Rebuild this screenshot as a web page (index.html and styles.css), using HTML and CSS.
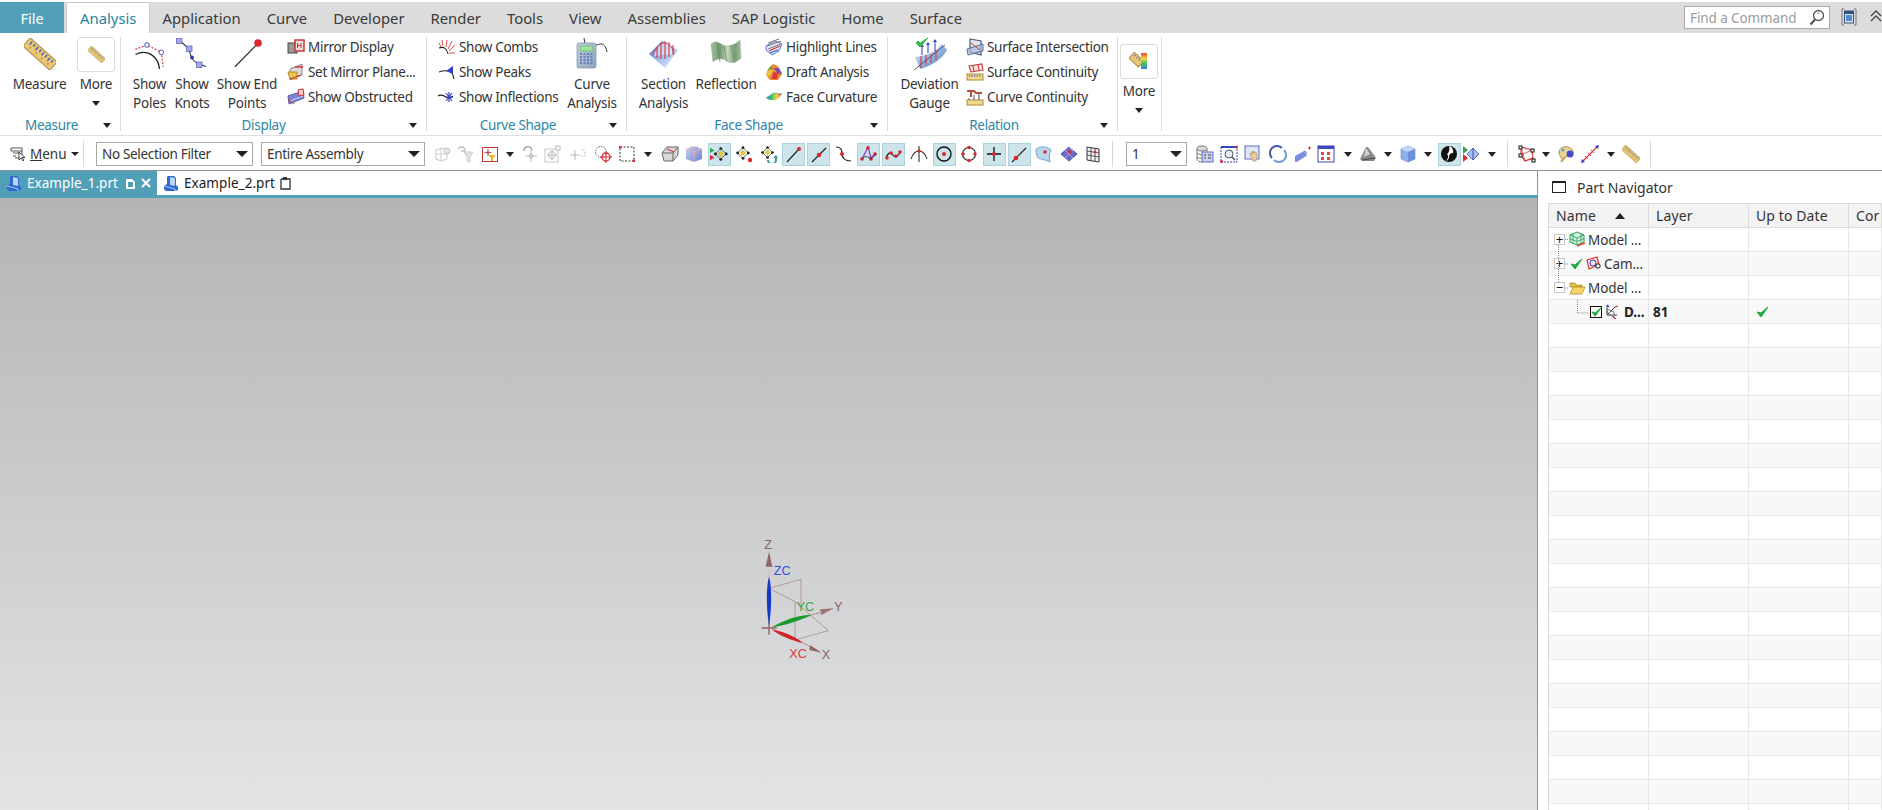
FILE: index.html
```html
<!DOCTYPE html>
<html lang="en">
<head>
<meta charset="utf-8">
<title>Part Navigator</title>
<link rel="stylesheet" href="styles.css">
</head>
<body>
<svg class="defs" aria-hidden="true">
  <defs>
    <linearGradient id="gBlue" x1="0" y1="0" x2="1" y2="1"><stop offset="0" stop-color="#3a5fd0"/><stop offset=".55" stop-color="#a9c4ee"/><stop offset="1" stop-color="#e8eef8"/></linearGradient>
    <linearGradient id="gDev" x1="0" y1="0" x2="1" y2="1"><stop offset="0" stop-color="#dfe9f6"/><stop offset="1" stop-color="#4d7fc8"/></linearGradient>
    <linearGradient id="gCube" x1="0" y1="0" x2="1" y2="1"><stop offset="0" stop-color="#c9d6f4"/><stop offset="1" stop-color="#6c7fd0"/></linearGradient>
    <linearGradient id="gCalc" x1="0" y1="0" x2="1" y2="1"><stop offset="0" stop-color="#c4d2dc"/><stop offset="1" stop-color="#8aa2bd"/></linearGradient>
    <linearGradient id="gGreen" x1="0" y1="0" x2="1" y2="0"><stop offset="0" stop-color="#a8bf9e"/><stop offset=".3" stop-color="#71986f"/><stop offset=".55" stop-color="#c7d6bf"/><stop offset=".8" stop-color="#759a73"/><stop offset="1" stop-color="#a8bf9e"/></linearGradient>
    <linearGradient id="gRain" x1="0" y1="0" x2="1" y2="0"><stop offset="0" stop-color="#3c7fe0"/><stop offset=".35" stop-color="#39c46a"/><stop offset=".65" stop-color="#f2d43a"/><stop offset="1" stop-color="#e84a3a"/></linearGradient>
    <linearGradient id="gRain2" x1="0" y1="0" x2="0" y2="1"><stop offset="0" stop-color="#e8483a"/><stop offset=".35" stop-color="#f4d83a"/><stop offset=".65" stop-color="#3cc46a"/><stop offset="1" stop-color="#3c7fe0"/></linearGradient>
    <symbol id="ruler" viewBox="0 0 32 32"><g transform="rotate(42 16 16)"><rect x="-2" y="10.500" width="36" height="11" fill="#e7c873" stroke="#a98c45"/><path d="M2 12v4M6 12v3M10 12v4M14 12v3M18 12v4M22 12v3M26 12v4M30 12v3" stroke="#4a58c8" stroke-width="1.400"/><path d="M4 18h1M12 18h1M20 18h1M28 18h1" stroke="#c84040" stroke-width="1.500"/></g></symbol>
    <symbol id="dia" viewBox="0 0 18 18"><path d="M9 3 15 9 9 15 3 9Z" fill="none" stroke="#555"/><path d="M9 6 12 9 9 12 6 9Z" fill="#f0cf2c" stroke="#8a7a20" stroke-width=".5"/><circle cx="9" cy="3" r="1.600" fill="#222"/><circle cx="15" cy="9" r="1.600" fill="#222"/><circle cx="9" cy="15" r="1.600" fill="#222"/><circle cx="3" cy="9" r="1.600" fill="#222"/></symbol>
  </defs>
</svg>

<header class="menubar">
  <div class="file-tab">File</div>
  <nav class="tabs">
    <span class="tab tab-active">Analysis</span>
    <span class="tab">Application</span>
    <span class="tab">Curve</span>
    <span class="tab">Developer</span>
    <span class="tab">Render</span>
    <span class="tab">Tools</span>
    <span class="tab">View</span>
    <span class="tab">Assemblies</span>
    <span class="tab">SAP Logistic</span>
    <span class="tab">Home</span>
    <span class="tab">Surface</span>
  </nav>
  <div class="search">
    <span class="search-text">Find a Command</span>
    <svg width="16" height="18" viewBox="0 0 16 18"><circle cx="9.500" cy="6.500" r="5" fill="#fff" stroke="#555" stroke-width="1.300"/><path d="M6 10.500 1.500 15.500" stroke="#555" stroke-width="2.200"/><path d="M8 4.500a3 3 0 0 1 3-.5" stroke="#999" fill="none"/></svg>
  </div>
  <svg class="win-btn" width="16" height="18" viewBox="0 0 16 18"><path d="M3 1H1v16h2M13 1h2v16h-2" fill="none" stroke="#777"/><rect x="3.500" y="3" width="9" height="12" fill="#dfe7f2" stroke="#33507e"/><rect x="3.500" y="3" width="9" height="3" fill="#33507e"/><rect x="5" y="7" width="6" height="6" fill="#4f8fd8"/></svg>
  <svg class="chev-btn" width="12" height="14" viewBox="0 0 12 14"><path d="M1 6 6 1l5 5M1 11l5-5 5 5" fill="none" stroke="#444" stroke-width="1.300"/></svg>
</header>

<section class="ribbon">
  <div class="group g-measure">
    <div class="gbody">
      <div class="lb w53"><div class="ic"><svg width="32" height="32"><use href="#ruler"/></svg></div><div class="lbl">Measure</div></div>
      <div class="lb more-btn"><div class="morebox"><svg width="17" height="17"><use href="#ruler"/></svg></div><div class="lbl">More</div><i class="tri tri-more"></i></div>
    </div>
    <div class="gfoot"><span class="gname">Measure</span><i class="tri"></i></div>
  </div>

  <div class="group g-display">
    <div class="gbody">
      <div class="lb w33"><div class="ic"><svg width="32" height="32" viewBox="0 0 32 32"><path d="M1.500 16.500C12 11 24 17 25.500 31" fill="none" stroke="#222" stroke-width="1.300"/><path d="M1.300 11.300 13 7 27.300 14.300 29.300 29" fill="none" stroke="#d8404a" stroke-width="1.200" stroke-dasharray="2 1.500"/><circle cx="13" cy="7" r="2.300" fill="#fff" stroke="#4a50b8"/><circle cx="27.300" cy="14.300" r="2.300" fill="#fff" stroke="#4a50b8"/></svg></div><div class="lbl">Show<br>Poles</div></div>
      <div class="lb w34"><div class="ic"><svg width="32" height="32" viewBox="0 0 32 32"><path d="M3.300 3C10 7 13 10 14 15s4 9 9 11l7 2.500" fill="none" stroke="#333" stroke-width="1.100"/><rect x=".5" y="0" width="5.500" height="5.500" fill="#a7a9e2" stroke="#5558b8" stroke-width=".7"/><rect x="10.500" y="8" width="5.500" height="5.500" fill="#a7a9e2" stroke="#5558b8" stroke-width=".7"/><rect x="20.500" y="24" width="5.500" height="5.500" fill="#a7a9e2" stroke="#5558b8" stroke-width=".7"/><circle cx="16" cy="19.500" r="2" fill="#3840b0"/></svg></div><div class="lbl">Show<br>Knots</div></div>
      <div class="lb w60"><div class="ic"><svg width="32" height="32" viewBox="0 0 32 32"><path d="M4 28.700 27 5.300" stroke="#333" stroke-width="1.300"/><circle cx="27" cy="5" r="3.800" fill="#d8282e"/></svg></div><div class="lbl">Show End<br>Points</div></div>
      <div class="sc ml10">
        <div class="sm"><svg width="18" height="18" viewBox="0 0 18 18"><rect x="1" y="5" width="9" height="10" fill="#9a9a9a" stroke="#444"/><rect x="8" y="2" width="9" height="11" fill="#f6dede" stroke="#c8282e" stroke-width="1.400"/><path d="M10.500 5v5M14 5v5M10.500 7.500h3" stroke="#c8282e"/></svg><span>Mirror Display</span></div>
        <div class="sm"><svg width="18" height="18" viewBox="0 0 18 18"><path d="M3 6 15 1v11L3 17Z" fill="#d8d8d8" stroke="#888"/><path d="M1 9h9v7H3Z" fill="#e9c650" stroke="#b08a20"/><path d="M8 4h8" stroke="#d8282e" stroke-width="1.400"/><path d="M3 16 14 12" stroke="#d8282e"/></svg><span>Set Mirror Plane...</span></div>
        <div class="sm"><svg width="18" height="18" viewBox="0 0 18 18"><path d="M1 8 16 3l1 7L2 16Z" fill="#7b84d8" stroke="#5c5cae"/><path d="M3 13l13-5" stroke="#d8d8f0"/><path d="M11 2l5-1 1 6-5 1Z" fill="#f2c8c8" stroke="#d02a30"/><path d="M1 11l6 5" stroke="#d02a30"/></svg><span>Show Obstructed</span></div>
      </div>
    </div>
    <div class="gfoot"><span class="gname">Display</span><i class="tri"></i></div>
  </div>

  <div class="group g-curve">
    <div class="gbody">
      <div class="sc w120">
        <div class="sm"><svg width="18" height="18" viewBox="0 0 18 18"><path d="M1 10C6 8 9 11 10 16" fill="none" stroke="#222" stroke-width="1.100"/><path d="M3 9 1 5M5 8 4 2M8 9l1-7M10 11l4-8M11 13l6-6M11 15h6" stroke="#dc4a44"/></svg><span>Show Combs</span></div>
        <div class="sm"><svg width="18" height="18" viewBox="0 0 18 18"><path d="M1 9c6-2 10-1 12 0s2 4 3 7" fill="none" stroke="#222" stroke-width="1.100"/><path d="M15 3v8L8 8Z" fill="#2f3fd0"/></svg><span>Show Peaks</span></div>
        <div class="sm"><svg width="18" height="18" viewBox="0 0 18 18"><path d="M0 8c3-2 5-1 8 1s5 1 7-1" fill="none" stroke="#222" stroke-width="1.100"/><path d="M8 5l6 8M14 5l-6 8M11 4v10M7 9h8" stroke="#3a48c8" stroke-width="1.200"/></svg><span>Show Inflections</span></div>
      </div>
      <div class="lb w60 ml4"><div class="ic"><svg width="34" height="32" viewBox="0 0 34 32"><path d="M9 0l1 6c4 3 12 1 15 0s6 2 7 8" fill="none" stroke="#333"/><rect x="2" y="5" width="19" height="25" rx="2" fill="url(#gCalc)" stroke="#7c8fa4" stroke-width=".7"/><rect x="5" y="8" width="13" height="5" fill="#9ee39a" stroke="#5aa070" stroke-width=".5"/><path d="M5 16h13M5 19h13M5 22h13M5 25h13" stroke="#5c6ab8" stroke-width="1.500" stroke-dasharray="2 1.500"/></svg></div><div class="lbl">Curve<br>Analysis</div></div>
    </div>
    <div class="gfoot"><span class="gname">Curve Shape</span><i class="tri"></i></div>
  </div>

  <div class="group g-face">
    <div class="gbody">
      <div class="lb w49"><div class="ic"><svg width="32" height="32" viewBox="0 0 32 32"><path d="M1 16 14 3 30 12 17 30Z" fill="url(#gBlue)"/><path d="M5 18C8 8 14 4 18 5s7 5 8 11" fill="#fff" fill-opacity=".55" stroke="#d8383e"/><path d="M9 20V9M13 21V5M17 21V3M21 19V4M25 17V7" stroke="#d8383e" stroke-width="1.100"/></svg></div><div class="lbl">Section<br>Analysis</div></div>
      <div class="lb w58 ml9"><div class="ic"><svg width="32" height="28" viewBox="0 0 32 28"><path d="M1 6C6 2 9 5 13 7S24 8 30 2l1 18c-5 5-10 6-14 3S7 20 3 24Z" fill="url(#gGreen)" stroke="#8ca88a" stroke-width=".5"/><path d="M7 5l3 19M14 8l3 16M21 7l3 14" stroke="#5e8a5e" stroke-width=".7" fill="none"/></svg></div><div class="lbl">Reflection</div></div>
      <div class="sc ml10">
        <div class="sm"><svg width="18" height="18" viewBox="0 0 18 18"><path d="M1 8 10 3l7 3-3 7-7 4-6-5Z" fill="#dfe6f6" stroke="#5c7ac8"/><path d="M3 5 14 1M2 8l14-5M3 11l13-5" stroke="#777"/><path d="M4 13l11-5" stroke="#d8383e" stroke-width="1.300"/><path d="M5 15l8-3" stroke="#3d5fc8" stroke-width="1.300"/></svg><span>Highlight Lines</span></div>
        <div class="sm"><svg width="18" height="18" viewBox="0 0 18 18"><path d="M3 6 8 1l5 2 4 8-4 6-8 0-4-5Z" fill="#e88a30"/><path d="M6 3 8 9l-4 5-3-2Z" fill="#eec23c"/><path d="M9 5h5l3 6-5-1Z" fill="#7f4ab0"/><path d="M8 9l5 1-1 6H7Z" fill="#d8383e"/><path d="M3 7 6 3 8 6Z" fill="#5a9c50"/></svg><span>Draft Analysis</span></div>
        <div class="sm"><svg width="18" height="18" viewBox="0 0 18 18"><path d="M1 10 9 5l8 1-6 6H5Z" fill="url(#gRain)"/><path d="M1 10l8-5 8 1" fill="none" stroke="#3aa8a0" stroke-width=".7"/></svg><span>Face Curvature</span></div>
      </div>
    </div>
    <div class="gfoot"><span class="gname">Face Shape</span><i class="tri"></i></div>
  </div>

  <div class="group g-rel">
    <div class="gbody">
      <div class="lb w57"><div class="ic ic-dev"><svg width="36" height="34" viewBox="0 0 36 34"><path d="M3 20c10-1 20-4 27-13l5 6c-4 8-15 16-27 19Z" fill="url(#gDev)"/><path d="M2 33 33 8" stroke="#2a3a50" stroke-width=".8"/><path d="M9 19v12M14 18v10M19 17v9M24 13v10" stroke="#d8383e" stroke-width="1.100"/><path d="M10 8v10M16 6v10M23 3v11" stroke="#2f4fc0" stroke-width="1.100"/><path d="M8 10l2-3 2 3ZM14 8l2-3 2 3ZM21 5l2-3 2 3Z" fill="#2f4fc0"/><path d="M4 6l4 4 8-9-8 5-2-2Z" fill="#3bb84a" stroke="#3bb84a" stroke-linejoin="round"/></svg></div><div class="lbl">Deviation<br>Gauge</div></div>
      <div class="sc ml8">
        <div class="sm"><svg width="18" height="18" viewBox="0 0 18 18"><path d="M4 1 15 3v14L4 14Z" fill="#e4e8ec" stroke="#455a78" stroke-width="1.200"/><path d="M1 11 17 6v7L2 17Z" fill="#a8b8dc" fill-opacity=".7" stroke="#5c6f9a"/><path d="M5 5l9 7" stroke="#c8383e"/></svg><span>Surface Intersection</span></div>
        <div class="sm"><svg width="18" height="18" viewBox="0 0 18 18"><path d="M3 3l13-2 1 6-12 2Z" fill="#f3e0e0" stroke="#c8383e" stroke-width="1.100"/><path d="M7 3l1 5M12 2l1 5" stroke="#c8383e"/><rect x="1" y="11" width="16" height="6" fill="#f0d98a" stroke="#b08a3a"/><path d="M3 13h12" stroke="#3a48c8" stroke-dasharray="1.500 1"/></svg><span>Surface Continuity</span></div>
        <div class="sm"><svg width="18" height="18" viewBox="0 0 18 18"><path d="M1 3h7l2 2h6M5 3v6" fill="none" stroke="#b0523c" stroke-width="2"/><rect x="1" y="12" width="16" height="5" fill="#f0d98a" stroke="#b08a3a"/><path d="M3 10v2M8 7v5M13 5v7" stroke="#555"/></svg><span>Curve Continuity</span></div>
      </div>
    </div>
    <div class="gfoot"><span class="gname">Relation</span><i class="tri"></i></div>
  </div>

  <div class="group g-more">
    <div class="lb more-btn more-low"><div class="morebox"><svg width="20" height="20" viewBox="0 0 20 20"><g transform="rotate(42 10 10)"><rect x="0" y="6" width="13" height="8" fill="#e7c873" stroke="#a98c45"/><path d="M2 8h1M5 8h1M8 8h1M11 8h1" stroke="#4a58c8" stroke-width="1.500"/></g><rect x="12" y="1" width="6" height="16" fill="url(#gRain2)"/></svg></div><div class="lbl">More</div><i class="tri tri-more"></i></div>
  </div>
</section>

<section class="toolbar">
  <div class="menu-btn">
    <svg width="17" height="16" viewBox="0 0 17 16"><path d="M1 2h11v10H5M1 2v3h11M3 7h6M3 10h3" fill="none" stroke="#555"/><path d="M9 6v8l2-2 2 3 1-1-2-2.500h3Z" fill="#fff" stroke="#222" stroke-width=".8"/></svg>
    <span class="menu-label"><u>M</u>enu</span><i class="tri tri-menu"></i>
  </div>
  <div class="combo combo-filter"><span>No Selection Filter</span><i class="tri tri-big"></i></div>
  <div class="combo combo-scope"><span>Entire Assembly</span><i class="tri tri-big"></i></div>

  <div class="tools tools-a">
    <span class="ti"><svg viewBox="0 0 18 18"><path d="M2 5l6-2 5 2v9l-6 2-5-2Z" fill="none" stroke="#c8c8c8"/><path d="M7 3v13M2 9h11" stroke="#d0d0d0"/><circle cx="13" cy="6" r="3" fill="#e6e6e6" stroke="#c4c4c4"/></svg></span>
    <span class="ti"><svg viewBox="0 0 18 18"><path d="M1 4a4 4 0 0 1 7 0v2H4" fill="none" stroke="#bfbfbf" stroke-width="1.500"/><path d="M7 7h9l-3 5v5l-3-1v-4Z" fill="#e2e2e2" stroke="#cfcfcf"/></svg></span>
    <span class="ti"><span class="redbox"><svg viewBox="0 0 14 13"><path d="M5 1v7M1.500 4.500h7" stroke="#8a6a6a"/><circle cx="5" cy="4.500" r="1.300" fill="#d8383e"/><path d="M5 7h8l-3 3v3H8v-3Z" fill="#f0b428"/></svg></span></span>
    <span class="ti"><i class="tri"></i></span>
    <span class="ti"><svg viewBox="0 0 18 18"><path d="M10 5v12M4 11h12" stroke="#bbb"/><circle cx="10" cy="11" r="2" fill="none" stroke="#bbb"/><path d="M3 6a4 4 0 0 1 7-3l1 2" fill="none" stroke="#999" stroke-width="1.300"/></svg></span>
    <span class="ti"><svg viewBox="0 0 18 18"><rect x="1" y="4" width="13" height="13" fill="none" stroke="#c8c8c8"/><rect x="12" y="1" width="4" height="4" fill="#fff" stroke="#bbb"/><circle cx="8" cy="10" r="3.500" fill="none" stroke="#bbb"/><path d="M8 5v10M3 10h10" stroke="#bbb"/></svg></span>
    <span class="ti"><svg viewBox="0 0 18 18"><path d="M6 5v10M1 10h10" stroke="#bbb"/><circle cx="6" cy="10" r="1.500" fill="#ccc"/><path d="M12 11h4V6M13 4l3 2" fill="none" stroke="#bbb" stroke-dasharray="2 1"/></svg></span>
    <span class="ti"><svg viewBox="0 0 18 18"><circle cx="7" cy="7" r="5.500" fill="none" stroke="#666" stroke-dasharray="1.500 1"/><circle cx="12" cy="12" r="4" fill="none" stroke="#d8282e" stroke-width="1.300"/><path d="M12 6v12M6 12h12" stroke="#d8282e"/></svg></span>
    <span class="ti"><svg viewBox="0 0 18 18"><rect x="2" y="2" width="14" height="14" fill="none" stroke="#333" stroke-dasharray="2 1.500"/><rect x="1" y="1" width="2.500" height="2.500" fill="#d8282e"/><rect x="14.500" y="14.500" width="2.500" height="2.500" fill="#d8282e"/></svg></span>
    <span class="ti"><i class="tri"></i></span>
    <span class="ti"><svg viewBox="0 0 18 18"><path d="M1 8 6 2h11v8l-5 6H3Z" fill="#d8d8d8" stroke="#666"/><path d="M2 8h10v8M12 8l5-6" fill="none" stroke="#666"/><path d="M6 4l7 3" stroke="#d8383e" stroke-width="1.300"/></svg></span>
    <span class="ti"><svg viewBox="0 0 18 18"><path d="M1 4 9 1l8 3v10l-8 3-8-3Z" fill="url(#gCube)"/><path d="M1 4l8 3 8-3M9 7v10" fill="none" stroke="#f0b0c0" stroke-width=".8"/><path d="M6 1v7l6 2V1" fill="none" stroke="#e08898" stroke-width=".6"/></svg></span>
    <span class="ti hl"><svg viewBox="0 0 20 18"><use href="#dia" x="3" width="18" height="18"/><path d="M0 2l5 3-5 3Z" fill="#2ea84a"/><path d="M0 10l5 3-5 3Z" fill="#d8282e"/></svg></span>
    <span class="ti"><svg viewBox="0 0 18 18"><use href="#dia" width="16" height="16"/><circle cx="15" cy="15" r="2.200" fill="#d8282e"/></svg></span>
    <span class="ti"><svg viewBox="0 0 18 18"><use href="#dia" width="15" height="15"/><path d="M8 15a4 4 0 0 0 8 0v-3" fill="none" stroke="#3a9aa0" stroke-width="2"/><path d="M13 13l3-3 2 3Z" fill="#3a9aa0"/></svg></span>
    <span class="ti hl"><svg viewBox="0 0 18 18"><path d="M2 17 14 4" stroke="#222" stroke-width="1.200"/><circle cx="14" cy="4" r="2" fill="#d8282e"/></svg></span>
    <span class="ti hl"><svg viewBox="0 0 18 18"><path d="M2 17 16 3" stroke="#222" stroke-width="1.200"/><circle cx="9" cy="10" r="2.300" fill="#d8282e"/></svg></span>
    <span class="ti"><svg viewBox="0 0 18 18"><path d="M1 2c5 0 6 3 6 6s1 8 9 8" fill="none" stroke="#222" stroke-width="1.200"/><circle cx="7" cy="9" r="2" fill="#d8282e"/></svg></span>
    <span class="ti hl"><svg viewBox="0 0 18 18"><path d="M2 14 8 2l3 11 5-5" fill="none" stroke="#8a3ac8" stroke-width="1.200"/><circle cx="2" cy="14" r="1.800" fill="#d8282e"/><circle cx="8" cy="3" r="1.800" fill="#d8282e"/><circle cx="11" cy="14" r="1.800" fill="#d8282e"/><circle cx="15" cy="9" r="1.800" fill="#d8282e"/><path d="M2 14c3-4 5-2 8-1s4-2 6-4" fill="none" stroke="#222" stroke-width=".8"/></svg></span>
    <span class="ti hl"><svg viewBox="0 0 18 18"><path d="M1 13c2-6 5-6 7-3s4 3 8-4" fill="none" stroke="#222" stroke-width="1.200"/><circle cx="2" cy="13" r="1.800" fill="#d8282e"/><circle cx="6" cy="8" r="1.800" fill="#d8282e"/><circle cx="11" cy="11" r="1.800" fill="#d8282e"/><circle cx="15" cy="7" r="1.800" fill="#d8282e"/></svg></span>
    <span class="ti"><svg viewBox="0 0 18 18"><path d="M1 14c2-6 5-8 8-8s6 2 8 8M9 1v16" fill="none" stroke="#333" stroke-width="1.100"/><circle cx="9" cy="6" r="1.700" fill="#d8282e"/></svg></span>
    <span class="ti hl"><svg viewBox="0 0 18 18"><circle cx="9" cy="9" r="7" fill="none" stroke="#111" stroke-width="1.400"/><circle cx="9" cy="9" r="2" fill="#d8282e"/></svg></span>
    <span class="ti"><svg viewBox="0 0 18 18"><circle cx="9" cy="9" r="6.500" fill="none" stroke="#222" stroke-width="1.100"/><circle cx="9" cy="2.500" r="1.800" fill="#d8282e"/><circle cx="3" cy="9" r="1.800" fill="#d8282e"/><circle cx="15" cy="9" r="1.800" fill="#d8282e"/><circle cx="9" cy="15.500" r="1.800" fill="#d8282e"/></svg></span>
    <span class="ti hl"><svg viewBox="0 0 18 18"><path d="M9 2v14M2 9h14" stroke="#111" stroke-width="1.300"/><circle cx="9" cy="9" r="2" fill="#d8282e"/></svg></span>
    <span class="ti hl"><svg viewBox="0 0 18 18"><path d="M2 17 16 3" stroke="#222" stroke-width="1.200"/><circle cx="6" cy="13" r="2.300" fill="#d8282e"/></svg></span>
    <span class="ti"><svg viewBox="0 0 18 18"><path d="M1 4c4-3 10-3 15 1-2 4-2 7-1 12C9 14 4 14 3 13 1 10 1 7 1 4Z" fill="#b8d6ee" stroke="#7aa4c8"/><circle cx="10" cy="7" r="1.800" fill="#d8282e"/></svg></span>
    <span class="ti"><svg viewBox="0 0 18 18"><path d="M1 9 9 2l8 7-8 7Z" fill="#6a6ac8" stroke="#5050a8"/><path d="M5 5l8 8M9 2l4 4M5 13l8-8" stroke="#c8c8f0" stroke-width=".7"/><circle cx="10" cy="7" r="1.800" fill="#d8282e"/></svg></span>
    <span class="ti"><svg viewBox="0 0 18 18"><path d="M3 2l12 2v13L3 15Z" fill="#f2f2f2" stroke="#333"/><path d="M7 3v13M11 3.500v13M3 6l12 2M3 10l12 2" stroke="#333" stroke-width=".8"/><circle cx="11" cy="7" r="1.300" fill="#d8282e"/></svg></span>
  </div>

  <div class="tsep"></div>
  <div class="combo combo-num"><span>1</span><i class="tri tri-big"></i></div>

  <div class="tools tools-b">
    <span class="ti"><svg viewBox="0 0 18 18"><ellipse cx="6" cy="3.500" rx="5" ry="2.500" fill="#d8d8d8" stroke="#777"/><path d="M1 4v10c0 2 3 3 5 3M11 4v3" fill="none" stroke="#777"/><path d="M1 8c2 2 6 2 8 1M1 12c2 1 4 2 6 1" fill="none" stroke="#777"/><rect x="6" y="7" width="11" height="10" fill="#c8d0f0" stroke="#5c6fb8"/><path d="M8 10h2M12 10h3M8 13h2M12 13h3" stroke="#444"/></svg></span>
    <span class="ti"><svg viewBox="0 0 18 18"><rect x="1" y="2" width="16" height="15" fill="#fff" stroke="#3548c0" stroke-dasharray="2 1"/><rect x="1" y="1" width="16" height="2" fill="#3548c0"/><circle cx="9" cy="9" r="4" fill="#e6ecf4" stroke="#556"/><path d="M12 12l3 3" stroke="#556" stroke-width="1.500"/><circle cx="1.500" cy="16.500" r="1.500" fill="#d8282e"/><circle cx="16.500" cy="2" r="1.500" fill="#d8282e"/></svg></span>
    <span class="ti"><svg viewBox="0 0 18 18"><rect x="1" y="1" width="14" height="13" fill="#dfe6f6" stroke="#5c6fb8"/><path d="M7 12l-1-4 2 1V6l1 2 1-2 1 2 1-1 1 4-1 5H9Z" fill="#e8c8a0" stroke="#b08850" stroke-width=".6"/></svg></span>
    <span class="ti"><svg viewBox="0 0 18 18"><path d="M3 13A7 7 0 0 1 13 3" fill="none" stroke="#4a5cb0" stroke-width="2"/><path d="M15 5a7 7 0 0 1-10 10" fill="none" stroke="#6fa0d8" stroke-width="2"/></svg></span>
    <span class="ti"><svg viewBox="0 0 18 18"><path d="M1 11l9-5 2 1v4l-9 6H1Z" fill="#7f8fe0"/><path d="M10 6l2 1v4" fill="#c5cdf4" stroke="#5c6fb8"/><path d="M14 3h3M15.500 1.500v3" stroke="#d8282e"/></svg></span>
    <span class="ti"><svg viewBox="0 0 18 18"><rect x="1" y="1" width="16" height="16" fill="#fff" stroke="#3a48b8"/><rect x="1" y="1" width="16" height="3" fill="#3a48b8"/><path d="M4 7h3v3H4ZM10 7h3v3h-3ZM4 12h3v3H4ZM10 12h3v3h-3Z" fill="#e8483e"/></svg></span>
    <span class="ti"><i class="tri"></i></span>
    <span class="ti"><svg viewBox="0 0 18 18"><path d="M1 14 7 2l2 0 6 8 2 3-2 3H3Z" fill="#8a8a8a"/><path d="M3 15l13-2" stroke="#444" stroke-width="1.200"/><path d="M7 3l4 6-6 3Z" fill="#d0d0d0"/></svg></span>
    <span class="ti"><i class="tri"></i></span>
    <span class="ti"><svg viewBox="0 0 18 18"><path d="M2 4 9 1l7 3v10l-7 3-7-3Z" fill="#8fb0e8" stroke="#6a8cc8" stroke-width=".6"/><path d="M2 4l7 3 7-3-7-3Z" fill="#c4d6f4"/><path d="M9 7v10l7-3V4Z" fill="#6f90d8"/></svg></span>
    <span class="ti"><i class="tri"></i></span>
    <span class="ti hl"><svg viewBox="0 0 18 18"><circle cx="9" cy="9" r="8" fill="#111"/><path d="M9 1c3 1 5 4 4 7-3 0-4 2-4 4s-2 4-3 4c2-2 3-5 1-7 2-1 3-5 2-8Z" fill="#fff"/></svg></span>
    <span class="ti"><svg viewBox="0 0 18 18"><path d="M1 1l5 4-5 4Z" fill="#2ea84a"/><path d="M1 9l5 4-5 4Z" fill="#d8282e"/><path d="M5 9l6-6 6 6-6 6Z" fill="#a8c0ec" stroke="#5c78c0"/><path d="M11 3v12" stroke="#3a48b8"/></svg></span>
    <span class="ti"><i class="tri"></i></span>
  </div>

  <div class="tsep"></div>

  <div class="tools tools-c">
    <span class="ti"><svg viewBox="0 0 18 18"><path d="M3 2l11 3 1 8-8 3-4-6Z" fill="none" stroke="#d8383e" stroke-width="1.200"/><path d="M3 10l11-5M7 16l-4-14M7 16l8-3" stroke="#d8383e" stroke-width=".8"/><rect x="1" y="1" width="3" height="3" fill="#fff" stroke="#111"/><rect x="13" y="4" width="3" height="3" fill="#fff" stroke="#111"/><rect x="1" y="9" width="3" height="3" fill="#fff" stroke="#111"/><rect x="14" y="14" width="3" height="3" fill="#fff" stroke="#111"/></svg></span>
    <span class="ti"><i class="tri"></i></span>
    <span class="ti"><svg viewBox="0 0 18 18"><path d="M1 8c0-5 5-7 9-6s7 5 4 8-5 0-7 3-4 1-6-5Z" fill="#ecd494" stroke="#a88a3c"/><circle cx="12" cy="9" r="3.500" fill="#4a4ac8"/><circle cx="5" cy="5" r="1.500" fill="#48a8e0"/><path d="M7 12l-4 5" stroke="#c8a040" stroke-width="2"/></svg></span>
    <span class="ti"><svg viewBox="0 0 18 18"><path d="M2 16 16 2" stroke="#d8383e" stroke-width="1.300"/><path d="M4 11l3 3M7 8l3 3M10 5l3 3" stroke="#d8383e"/><path d="M1 14l3 3-4 1ZM14 1l3 3 1-4Z" fill="#3040c8"/></svg></span>
    <span class="ti"><i class="tri"></i></span>
    <span class="ti"><svg class="ruler-sm" width="16" height="16"><use href="#ruler"/></svg></span>
  </div>
  <div class="tsep tsep-c"></div>
</section>

<main class="workspace">
  <div class="left">
    <div class="doctabs">
      <div class="doc doc-active">
        <svg width="16" height="17" viewBox="0 0 16 17"><path d="M5 1h6L13 3v7l2 2v3l-3 1H3L1 14v-3l3-2V2Z" fill="#2a6ad0"/><path d="M7 2v8l5 1V3Z" fill="#bcd4f4"/><path d="M1 11l11 3v2" fill="none" stroke="#e8f0fa" stroke-width=".7"/></svg>
        <span class="doc-name">Example_1.prt</span>
        <svg width="11" height="13" viewBox="0 0 11 13"><path d="M1 2h6l3 3v7H1Z" fill="#fff"/><rect x="3" y="5" width="5" height="5" fill="#529fb8"/></svg>
        <svg width="10" height="10" viewBox="0 0 10 10"><path d="M1 1l8 8M9 1 1 9" stroke="#fff" stroke-width="2"/></svg>
      </div>
      <div class="doc">
        <svg width="16" height="17" viewBox="0 0 16 17"><path d="M5 1h6L13 3v7l2 2v3l-3 1H3L1 14v-3l3-2V2Z" fill="#2a6ad0"/><path d="M7 2v8l5 1V3Z" fill="#bcd4f4"/><path d="M1 11l11 3v2" fill="none" stroke="#e8f0fa" stroke-width=".7"/></svg>
        <span class="doc-name">Example_2.prt</span>
        <svg width="11" height="13" viewBox="0 0 11 13"><path d="M1 2h2M7 2h3v10H1V2" fill="none" stroke="#333" stroke-width="1.300"/><rect x="3" y="0" width="4" height="3" fill="#333"/></svg>
      </div>
    </div>
    <div class="viewport">
      <svg class="gizmo" width="140" height="150" viewBox="0 0 420 450">
        <path d="M117 205 213 178V265M117 205 195 245V355M195 245 295 332 205 357" fill="none" stroke="#a67c7c" stroke-width="2"/>
        <path d="M95 324h45M117 302v42" stroke="#94605f" stroke-width="4"/>
        <path d="M117 150v30" stroke="#c8c0c4" stroke-width="3"/>
        <path d="M117 170C108 200 109 270 117 315 125 270 126 200 117 170Z" fill="#1438c8"/>
        <path d="M125 322C170 295 210 285 248 284 210 300 170 316 125 322Z" fill="#1e9a2c"/>
        <path d="M125 328C160 335 200 352 220 370 185 362 150 348 125 328Z" fill="#d0242a"/>
        <path d="M117 95 107 140H127Z" fill="#8c6464"/>
        <path d="M312 265 270 268 274 285Z" fill="#a07474"/>
        <path d="M275 398 240 375 238 390Z" fill="#8c6464"/>
        <path d="M245 284 270 278M218 368 240 380" stroke="#a67c7c" stroke-width="2.500"/>
        <text class="gz gz-brown" x="103" y="88">Z</text>
        <text class="gz gz-blue" x="131" y="164">ZC</text>
        <text class="gz gz-green" x="200" y="272">YC</text>
        <text class="gz gz-brown" x="312" y="274">Y</text>
        <text class="gz gz-red" x="178" y="414">XC</text>
        <text class="gz gz-brown" x="275" y="416">X</text>
      </svg>
    </div>
  </div>

  <aside class="panel">
    <div class="panel-title">
      <span class="win-ico"></span>
      <span>Part Navigator</span>
    </div>
    <div class="nav-wrap">
      <table class="nav">
        <colgroup><col class="c1"><col class="c2"><col class="c3"><col class="c4"></colgroup>
        <thead>
          <tr><th><span class="th-name">Name<i class="sort"></i></span></th><th>Layer</th><th>Up to Date</th><th>Cor</th></tr>
        </thead>
        <tbody>
          <tr><td><div class="node"><span class="exp">+</span><svg width="17" height="17" viewBox="0 0 17 17"><path d="M8 1 15 4v7l-7 3-7-3V4Z" fill="#d8f0e0" stroke="#25a05a"/><path d="M1 4l7 3 7-3M8 7v7M4 2.500v9M12 2.500v9M1 7.500l7 3 7-3" fill="none" stroke="#25a05a" stroke-width=".8"/><path d="M8 15 16 12" stroke="#e04a3a" stroke-width="1.500"/></svg><span class="nm">Model ...</span></div></td><td></td><td></td><td></td></tr>
          <tr><td><div class="node node-cam"><span class="exp">+</span><svg width="13" height="12" viewBox="0 0 13 12"><path d="M1 6l4 5 7-10-7 6Z" fill="#1fa83a" stroke="#1fa83a" stroke-linejoin="round"/></svg><svg width="15" height="15" viewBox="0 0 15 15"><path d="M1 4l10-3 2 8-10 4Z" fill="#f6e6e6" stroke="#e0342c" stroke-width="1.200"/><circle cx="7" cy="7" r="3" fill="none" stroke="#2a3ac0"/><circle cx="12" cy="10" r="2.200" fill="#fff" stroke="#111"/></svg><span class="nm">Cam...</span></div></td><td></td><td></td><td></td></tr>
          <tr><td><div class="node"><span class="exp">&#8722;</span><svg width="17" height="15" viewBox="0 0 17 15"><path d="M1 3h5l1 2h6v2H1Z" fill="#e8c34a" stroke="#a8822a" stroke-width=".7"/><path d="M1 14 4 7h12l-3 7Z" fill="#f4d566" stroke="#a8822a" stroke-width=".7"/></svg><span class="nm">Model ...</span></div></td><td></td><td></td><td></td></tr>
          <tr class="strong"><td><div class="node node-child"><span class="cbox"><svg width="11" height="10" viewBox="0 0 13 12"><path d="M1 6l4 5 7-10-7 6Z" fill="#1fa83a" stroke="#1fa83a" stroke-linejoin="round"/></svg></span><svg width="14" height="15" viewBox="0 0 14 15"><path d="M2 1v10h10M2 11l8-8" fill="none" stroke="#444"/><path d="M2 5l7 3v5L2 10Z" fill="none" stroke="#777"/><path d="M2 1l2 2" stroke="#2a3ac0" stroke-width="1.500"/><path d="M10 3l3-1M8 13l3 2" stroke="#d8282e" stroke-width="1.200"/></svg><span class="nm">D...</span></div></td><td class="num">81</td><td class="ok"><svg width="13" height="12" viewBox="0 0 13 12"><path d="M1 6l4 5 7-10-7 6Z" fill="#1fa83a" stroke="#1fa83a" stroke-linejoin="round"/></svg></td><td></td></tr>
          <tr><td></td><td></td><td></td><td></td></tr><tr><td></td><td></td><td></td><td></td></tr>
          <tr><td></td><td></td><td></td><td></td></tr><tr><td></td><td></td><td></td><td></td></tr>
          <tr><td></td><td></td><td></td><td></td></tr><tr><td></td><td></td><td></td><td></td></tr>
          <tr><td></td><td></td><td></td><td></td></tr><tr><td></td><td></td><td></td><td></td></tr>
          <tr><td></td><td></td><td></td><td></td></tr><tr><td></td><td></td><td></td><td></td></tr>
          <tr><td></td><td></td><td></td><td></td></tr><tr><td></td><td></td><td></td><td></td></tr>
          <tr><td></td><td></td><td></td><td></td></tr><tr><td></td><td></td><td></td><td></td></tr>
          <tr><td></td><td></td><td></td><td></td></tr><tr><td></td><td></td><td></td><td></td></tr>
          <tr><td></td><td></td><td></td><td></td></tr><tr><td></td><td></td><td></td><td></td></tr>
          <tr><td></td><td></td><td></td><td></td></tr><tr><td></td><td></td><td></td><td></td></tr>
          <tr><td></td><td></td><td></td><td></td></tr>
        </tbody>
      </table>
      <svg class="tree-lines" width="60" height="120" viewBox="0 0 60 120"><path d="M10.500 42V79M17 36.500h3M17 61h3M17 85h3M29.500 97v13H41" fill="none" stroke="#888" stroke-dasharray="1 1"/></svg>
    </div>
  </aside>
</main>
</body>
</html>
```
FILE: styles.css
```css
* { box-sizing: border-box; }
html, body { margin: 0; padding: 0; }
body {
  width: 1882px; height: 810px; overflow: hidden; background: #fff;
  font-family: "Noto Sans", "Open Sans", sans-serif; font-size: 13.5px; color: #333;
  display: flex; flex-direction: column; padding-top: 2px;
}
.defs { position: absolute; width: 0; height: 0; }
svg { display: block; flex: none; }
i { display: block; font-style: normal; }

/* triangles */
.tri { width: 0; height: 0; border-left: 4.5px solid transparent; border-right: 4.5px solid transparent; border-top: 5px solid #222; }
.tri-big { border-left-width: 6px; border-right-width: 6px; border-top-width: 6px; }
.tri-menu { margin-left: 4px; border-left-width: 4px; border-right-width: 4px; border-top-width: 4px; }
.tri-more { margin-top: 7px; }

/* menu bar */
.menubar { height: 31px; background: #dcdcdc; display: flex; align-items: stretch; flex: none; }
.file-tab { width: 64px; background: #529fb8; color: #fff; display: flex; align-items: center; justify-content: center; font-size: 14.5px; }
.tabs { display: flex; margin-left: 2px; }
.tab { padding: 0 13px; display: flex; align-items: center; font-size: 14.85px; color: #3a3a3a; }
.tab-active { background: #fff; color: #1f7f9e; border-top: 1px solid #c8c8c8; border-left: 1px solid #d0d0d0; border-right: 1px solid #d0d0d0; margin-right: -1px; }
.search { width: 146px; height: 23px; margin: 4px 0 0 auto; background: #fff; border: 1px solid #aaa; display: flex; align-items: center; justify-content: space-between; padding: 0 4px 0 5px; color: #9b9b9b; letter-spacing: -.1px; }
.win-btn { margin: 6px 0 0 11px; }
.chev-btn { margin: 8px 0 0 13px; }

/* ribbon */
.ribbon { height: 103px; flex: none; padding-top: 4px; display: flex; align-items: flex-start; border-bottom: 1px solid #dedede; }
.group { height: 94px; border-right: 1px solid #dcdcdc; display: flex; flex-direction: column; flex: none; }
.g-measure { width: 121px; }
.g-display { width: 306px; }
.g-curve { width: 200px; }
.g-face { width: 261px; }
.g-rel { width: 230px; }
.g-more { width: 44px; padding-left: 2px; }
.gbody { height: 79px; display: flex; align-items: flex-start; flex: none; }
.g-measure .gbody { padding-left: 13px; }
.g-display .gbody { padding-left: 12px; }
.g-curve .gbody { padding-left: 11px; }
.g-face .gbody { padding-left: 12px; }
.g-rel .gbody { padding-left: 13px; }
.gfoot { height: 18px; display: flex; align-items: center; padding-right: 9px; flex: none; }
.gname { flex: 1; text-align: center; color: #2b86a6; letter-spacing: -.3px; }
.g-display .gname { padding-right: 3px; }

.lb { display: flex; flex-direction: column; align-items: center; flex: none; white-space: nowrap; }
.ic { height: 37.5px; padding-top: 1px; }
.ic-dev { padding-top: 0; }
.lbl { line-height: 19px; text-align: center; letter-spacing: -.2px; }
.w33 { width: 33px; } .w34 { width: 34px; margin-left: 9px; } .w49 { width: 49px; }
.w53 { width: 53px; } .w57 { width: 57px; } .w58 { width: 58px; }
.w60 { width: 60px; } .w120 { width: 120px; }
.g-display .w60 { margin-left: 8px; }
.ml4 { margin-left: 4px; } .ml8 { margin-left: 8px; } .ml9 { margin-left: 9px; } .ml10 { margin-left: 10px; }
.more-btn { width: 38px; margin-left: 11px; }
.more-low { margin: 7px 0 0; }
.morebox { width: 38px; height: 35px; border: 1px solid #dcdcdc; border-radius: 3px; margin-bottom: 2.5px; display: flex; align-items: center; justify-content: center; }

.sc { display: flex; flex-direction: column; gap: 5px; flex: none; }
.sm { height: 20px; display: flex; align-items: center; gap: 3px; white-space: nowrap; letter-spacing: -.3px; }

/* toolbar */
.toolbar { height: 35px; flex: none; display: flex; align-items: center; border-bottom: 1px solid #8a9499; padding: 2px 0 0 10px; }
.menu-btn { width: 74px; height: 26px; display: flex; align-items: center; border-right: 1px solid #d8d8d8; flex: none; }
.menu-label { margin-left: 3px; }
.combo { height: 24px; border: 1px solid #a8a8a8; display: flex; align-items: center; justify-content: space-between; padding: 0 4px 0 5px; flex: none; letter-spacing: -.32px; }
.combo-filter { width: 157px; margin-left: 12px; }
.combo-scope { width: 164px; margin-left: 8px; }
.combo-num { width: 61px; margin-left: 13px; border-width: 1.500px; }
.tools { display: grid; align-items: center; flex: none; height: 24px; }
.tools-a { margin-left: 7px; grid-template-columns: 22px 24.5px 22px 18px 22px 24.5px 25.5px 25.5px 21.5px 20.5px 23px 25.5px 25.5px 24.5px 24.5px 25.5px 24.5px 25px 25.5px 24.5px 25.5px 25px 25px 25px 25px 25px 24.5px 24px; }
.tools-b { margin-left: 7px; grid-template-columns: 22.5px 24px 25px 24.5px 25px 22.5px 20.5px 20.5px 19.5px 19.5px 20.5px 22.5px 21.5px 19px; }
.tools-c { margin-left: 9px; grid-template-columns: 19.5px 19px 22.5px 23px 20px 20px; }
.ti { display: flex; align-items: center; justify-content: center; height: 24px; }
.ti > svg { width: 18px; height: 18px; }
.hl { width: 23px; height: 23px; justify-self: center; background: #cde5ea; border: 1px solid #a9d3dd; }
.redbox { width: 16px; height: 15px; border: 1px solid #c0383e; display: flex; }
.redbox svg { width: 14px; height: 13px; }
.tsep { width: 1px; height: 26px; background: #d8d8d8; margin-left: 7px; flex: none; }
.tools-b + .tsep { margin-left: 6px; }
.tsep-c { margin-left: 9px; }

/* workspace */
.workspace { flex: 1; min-height: 0; display: flex; }
.left { width: 1537px; display: flex; flex-direction: column; flex: none; }
.doctabs { height: 27px; border-bottom: 3px solid #529fb8; display: flex; flex: none; }
.doc { display: flex; align-items: center; width: 134px; padding-left: 6px; gap: 5px; letter-spacing: .05px; color: #222; }
.doc-active { width: 157px; background: #529fb8; color: #fff; }
.doc-name { width: 93px; white-space: nowrap; }
.viewport { flex: 1; position: relative; background: linear-gradient(#b3b4b6, #e3e4e6); }
.gizmo { position: absolute; left: 730px; top: 322px; }
.gz { font-family: "Liberation Sans", sans-serif; font-size: 38px; }
.gz-brown { fill: #8c6464; } .gz-blue { fill: #2f50e0; } .gz-green { fill: #3fa04a; } .gz-red { fill: #d83a3a; }

/* panel */
.panel { flex: 1; min-width: 0; border-left: 1px solid #8a9499; overflow: hidden; }
.panel-title { height: 32px; display: flex; align-items: center; padding: 0 0 0 14px; gap: 11px; font-size: 14px; }
.win-ico { width: 14px; height: 12px; border: 1px solid #222; border-top-width: 2px; }
.nav-wrap { position: relative; margin-left: 10px; }
.nav { border-collapse: collapse; table-layout: fixed; width: 333px; border-top: 1px solid #dadada; border-left: 1px solid #dadada; }
.c1, .c2, .c3 { width: 100px; }
.c4 { width: 33px; }
.nav th { height: 24px; padding: 0 0 0 7px; background: #f3f3f3; font-weight: 400; font-size: 14px; text-align: left; border-right: 1px solid #dcdcdc; border-bottom: 1px solid #dcdcdc; white-space: nowrap; overflow: hidden; letter-spacing: .1px; }
.th-name { display: flex; align-items: center; }
.sort { width: 0; height: 0; margin-left: 19px; border-left: 5.500px solid transparent; border-right: 5.500px solid transparent; border-bottom: 6px solid #222; }
.nav td { height: 24px; padding: 0; border-right: 1px solid #e8e8e8; border-bottom: 1px solid #e8e8e8; overflow: hidden; white-space: nowrap; }
.nav tbody tr:nth-child(even) { background: #f8f8f8; }
.node { display: flex; align-items: center; padding-left: 5px; height: 23px; gap: 2px; }
.node-cam { gap: 3px; }
.node-child { padding-left: 41px; gap: 3px; }
.exp { width: 11px; height: 11px; border: 1px solid #c8c8c8; background: #fff; font-size: 13px; line-height: 8px; text-align: center; color: #111; margin-right: 2px; flex: none; }
.nm { letter-spacing: -.1px; }
.strong { font-weight: 700; color: #222; }
.strong .nm { margin-left: 2px; }
.cbox { width: 12px; height: 12px; border: 1px solid #111; display: flex; align-items: center; justify-content: center; flex: none; }
.num { padding-left: 4px !important; }
.ok svg { margin-left: 7px; }
.tree-lines { position: absolute; left: 0; top: 0; pointer-events: none; }
```
